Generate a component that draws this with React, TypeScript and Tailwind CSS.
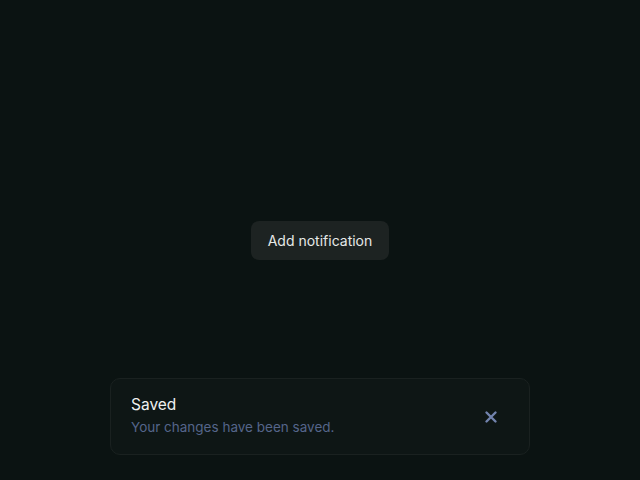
import React from "react";

export default function App() {
  return (
    <div
      className="relative h-screen w-full bg-[#0b1312] flex items-center justify-center"
      style={{ fontFamily: "Inter, 'Noto Sans', sans-serif" }}
    >
      <button className="h-[39px] px-[17px] rounded-[8px] bg-[#1d2322] text-[14px] text-[#e6e9e8] flex items-center">
        Add notification
      </button>
      <div className="absolute bottom-[25px] left-[110px] w-[420px] h-[77px] rounded-[10px] border border-[#1a2120] bg-[#0e1615] flex items-center pl-[20px] pr-[28px]">
        <div className="flex-1 flex flex-col mb-[2px]">
          <div className="text-[15.5px] leading-[20px] text-[#eef0f0]">Saved</div>
          <div className="text-[13.5px] leading-[20px] mt-[2px] text-[#55658a]">
            Your changes have been saved.
          </div>
        </div>
        <button className="w-[20px] h-[20px] flex items-center justify-center text-[#7283ad]">
          <svg width="16" height="16" viewBox="0 0 16 16" fill="none" stroke="currentColor" strokeWidth="2.4" strokeLinecap="round">
            <path d="M3.5 3.5l9 9M12.5 3.5l-9 9" />
          </svg>
        </button>
      </div>
    </div>
  );
}
